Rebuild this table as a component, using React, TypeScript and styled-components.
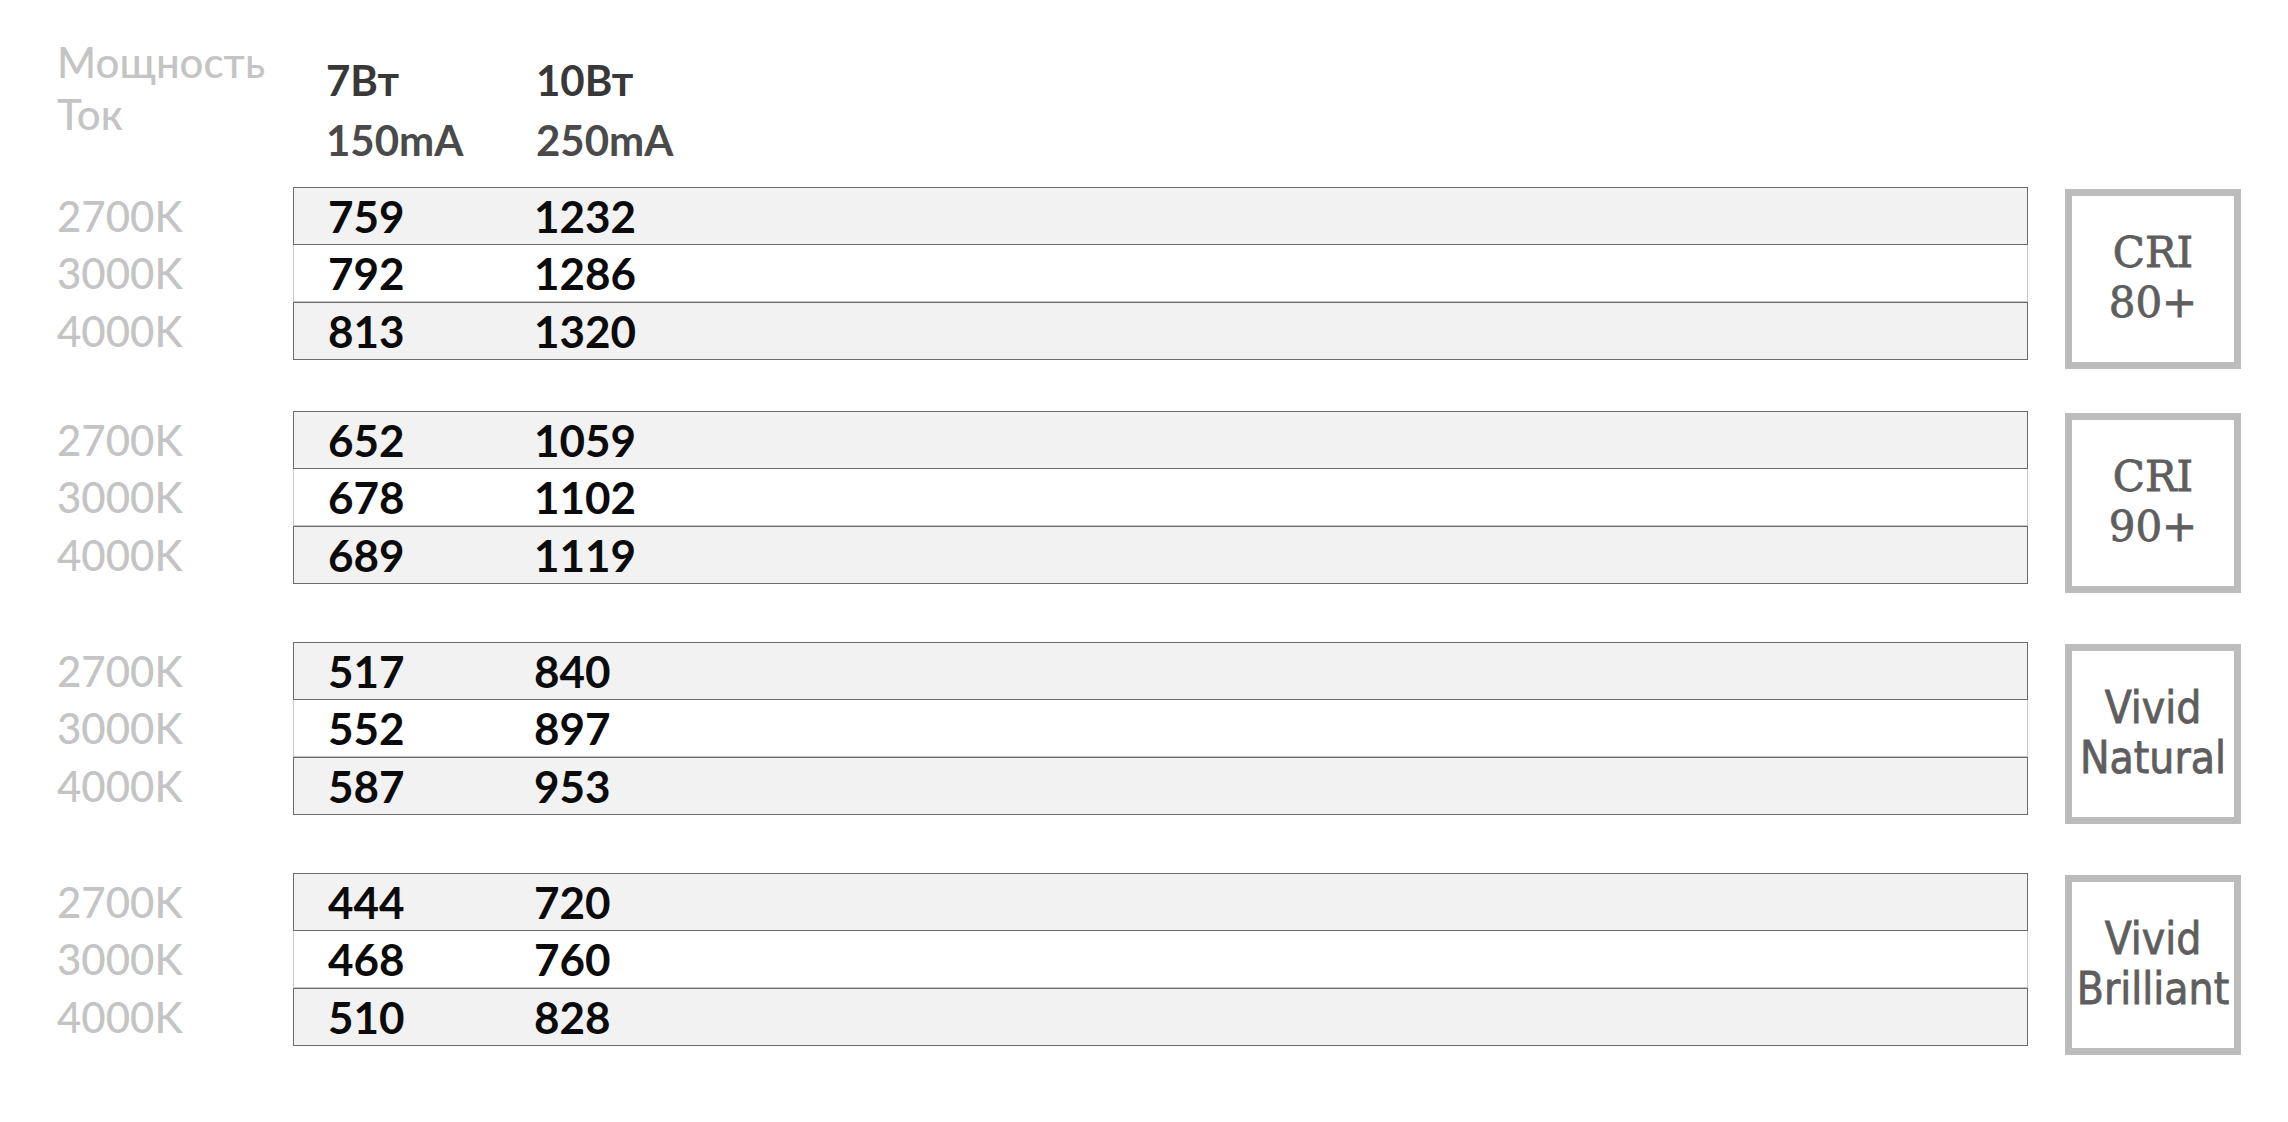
import React from "react";
import styled, { createGlobalStyle } from "styled-components";

const GlobalStyle = createGlobalStyle`
  html, body {
    margin: 0;
    padding: 0;
    background: #ffffff;
  }
  body {
    font-family: Lato, "Liberation Sans", sans-serif;
  }
`;

const Page = styled.div`
  box-sizing: border-box;
  width: 2288px;
  height: 1122px;
  overflow: hidden;
  padding: 36px 0 0 57px;
  background: #ffffff;
`;

const Header = styled.div`
  display: flex;
  align-items: flex-start;
  height: 131px;
`;

const LabelColumn = styled.div`
  width: 236px;
  flex-shrink: 0;
  display: flex;
  flex-direction: column;
`;

const MutedLabel = styled.div<{ $lh: number }>`
  font-size: 42px;
  line-height: ${(p) => p.$lh}px;
  height: ${(p) => p.$lh}px;
  color: #c4c4c4;
  font-weight: 500;
  white-space: nowrap;
`;

const HeaderCols = styled.div`
  display: grid;
  grid-template-columns: 210px auto;
  margin-top: 14px;
  padding-left: 33px;
`;

const HeaderCol = styled.div`
  display: flex;
  flex-direction: column;
`;

const HeaderText = styled.div<{ $weight: number; $color: string }>`
  font-size: 42px;
  line-height: 60px;
  color: ${(p) => p.$color};
  font-weight: ${(p) => p.$weight};
  white-space: nowrap;
`;

const Groups = styled.div`
  margin-top: 20px;
  display: flex;
  flex-direction: column;
`;

const Group = styled.div<{ $gap: number }>`
  display: flex;
  align-items: flex-start;
  margin-top: ${(p) => p.$gap}px;
`;

const Table = styled.div`
  width: 1735px;
  flex-shrink: 0;
  display: flex;
  flex-direction: column;
`;

const Row = styled.div<{ $shaded: boolean }>`
  box-sizing: border-box;
  display: grid;
  grid-template-columns: 206px auto;
  padding-left: 34px;
  height: ${(p) => (p.$shaded ? 58 : 57)}px;
  background: ${(p) => (p.$shaded ? "#f2f2f2" : "#ffffff")};
  border: 1px solid ${(p) => (p.$shaded ? "#6b6b6b" : "#c6c6c6")};
  border-top: ${(p) => (p.$shaded ? "1px solid #6b6b6b" : "none")};
`;

const Cell = styled.div`
  font-size: 44px;
  font-weight: 700;
  line-height: 56px;
  color: #0b0b0b;
  white-space: nowrap;
`;

const Badge = styled.div`
  box-sizing: border-box;
  width: 176px;
  height: 180px;
  margin-left: 37px;
  margin-top: 2px;
  border: 7px solid #bcbcbc;
  background: #ffffff;
  display: flex;
  flex-direction: column;
  align-items: center;
  justify-content: center;
  padding-bottom: 3px;
`;

const BadgeText = styled.div<{ $serif: boolean }>`
  font-family: ${(p) =>
    p.$serif
      ? '"DejaVu Serif", "Liberation Serif", serif'
      : '"DejaVu Sans Condensed", "DejaVu Sans", sans-serif'};
  font-stretch: ${(p) => (p.$serif ? "normal" : "condensed")};
  font-size: ${(p) => (p.$serif ? 42 : 44)}px;
  line-height: 50px;
  color: #5e5e5e;
  -webkit-text-stroke: 0.8px #5e5e5e;
  text-align: center;
  white-space: nowrap;
`;

type GroupData = {
  badge: [string, string];
  serif: boolean;
  gap: number;
  rows: [string, string][];
};

const temps = ["2700K", "3000K", "4000K"];

const groups: GroupData[] = [
  {
    badge: ["CRI", "80+"],
    serif: true,
    gap: 0,
    rows: [
      ["759", "1232"],
      ["792", "1286"],
      ["813", "1320"],
    ],
  },
  {
    badge: ["CRI", "90+"],
    serif: true,
    gap: 42,
    rows: [
      ["652", "1059"],
      ["678", "1102"],
      ["689", "1119"],
    ],
  },
  {
    badge: ["Vivid", "Natural"],
    serif: false,
    gap: 49,
    rows: [
      ["517", "840"],
      ["552", "897"],
      ["587", "953"],
    ],
  },
  {
    badge: ["Vivid", "Brilliant"],
    serif: false,
    gap: 49,
    rows: [
      ["444", "720"],
      ["468", "760"],
      ["510", "828"],
    ],
  },
];

export default function App() {
  return (
    <>
      <GlobalStyle />
      <Page>
        <Header>
          <LabelColumn>
            <MutedLabel $lh={52}>Мощность</MutedLabel>
            <MutedLabel $lh={52}>Ток</MutedLabel>
          </LabelColumn>
          <HeaderCols>
            <HeaderCol>
              <HeaderText $weight={700} $color="#383838">7Вт</HeaderText>
              <HeaderText $weight={700} $color="#4a4a4a">150mA</HeaderText>
            </HeaderCol>
            <HeaderCol>
              <HeaderText $weight={700} $color="#383838">10Вт</HeaderText>
              <HeaderText $weight={700} $color="#4a4a4a">250mA</HeaderText>
            </HeaderCol>
          </HeaderCols>
        </Header>
        <Groups>
          {groups.map((g, gi) => (
            <Group key={gi} $gap={g.gap}>
              <LabelColumn>
                {temps.map((t, i) => (
                  <MutedLabel key={t} $lh={i === 1 ? 57 : 58}>
                    {t}
                  </MutedLabel>
                ))}
              </LabelColumn>
              <Table>
                {g.rows.map((r, ri) => (
                  <Row key={ri} $shaded={ri !== 1}>
                    <Cell>{r[0]}</Cell>
                    <Cell>{r[1]}</Cell>
                  </Row>
                ))}
              </Table>
              <Badge>
                <BadgeText $serif={g.serif}>{g.badge[0]}</BadgeText>
                <BadgeText $serif={g.serif}>{g.badge[1]}</BadgeText>
              </Badge>
            </Group>
          ))}
        </Groups>
      </Page>
    </>
  );
}
